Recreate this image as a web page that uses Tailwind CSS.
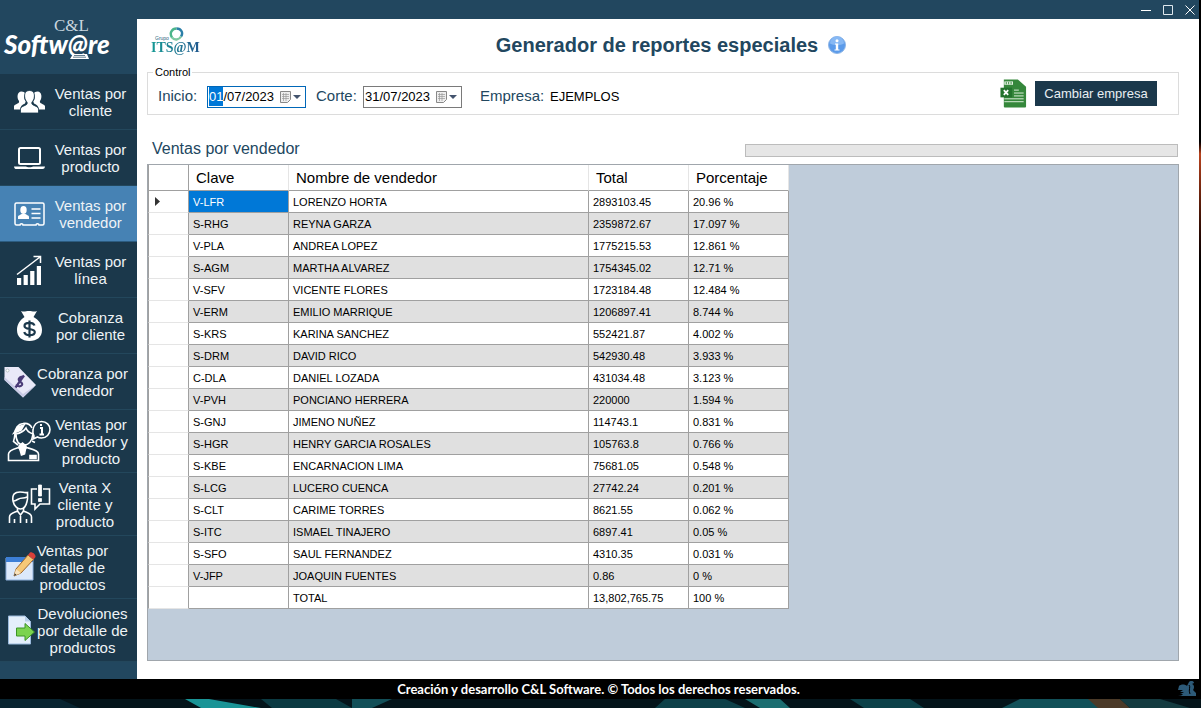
<!DOCTYPE html>
<html lang="es">
<head>
<meta charset="utf-8">
<meta name="viewport" content="width=device-width, initial-scale=1">
<title>Generador de reportes especiales</title>
<script src="https://cdn.jsdelivr.net/npm/@tailwindcss/browser@4"></script>
</head>
<body class="flex min-h-screen flex-col bg-[#03090d] font-['Liberation_Sans',Arial,sans-serif] text-black">
<div class="flex flex-1">
  <div class="flex flex-1 flex-col">
    <div class="flex flex-1">
      <!-- Sidebar -->
      <aside class="flex w-[137px] shrink-0 flex-col bg-[#22475f]">
        <div class="flex h-[74px] flex-col px-1 pt-[18px] text-white">
          <span class="pl-[50px] font-['Liberation_Serif',serif] text-[17px] leading-4 text-[#c9d6df]">C&amp;L</span>
          <span class="font-['Lato',sans-serif] text-[26px] leading-5 font-black italic">Softw@re</span>
          <svg class="ml-[66px] h-[5px] w-5" viewBox="0 0 20 5" fill="#fff"><path d="M3 0h14l2 5H0z"/><path d="M4 1.500h11M3 3.200h13" stroke="#22475f" stroke-width=".7"/></svg>
        </div>
        <nav class="flex flex-col text-center text-[15px] leading-[17px] whitespace-nowrap text-[#eef3f6]">
          <button type="button" class="flex h-14 items-center border-b border-[#23475c] bg-[#1b384b]">
            <svg class="mr-[7px] ml-[14px] h-6 w-[31px] shrink-0" viewBox="0 0 31 24" fill="#fff"><path d="M7.500 1.500c2 0 3 .8 3.500 1.700-1.500 3-1 6 .7 8.300l-.7 2c-3 1.200-4.600 2.800-5 6H0v-3.200c0-1.500 3.500-2.300 4.700-3.500.6-.6.500-1.500 0-2.200C3 8.500 2.700 1.500 7.500 1.500zM23.500 1.500c-2 0-3 .8-3.500 1.700 1.500 3 1 6-.7 8.300l.7 2c3 1.200 4.600 2.800 5 6h6v-3.200c0-1.500-3.500-2.300-4.700-3.500-.6-.6-.5-1.500 0-2.200 1.700-2.100 2-9.100-2.800-9.100z"/><path d="M15.500.5c4.300 0 5.200 3.500 4.800 6.500-.3 2.400-1.300 4-2.300 5-.4.800-.3 1.800.3 2.400 1.800 1.600 6.200 1.900 6.200 5V23h-18v-3.600c0-3.100 4.400-3.400 6.200-5 .6-.6.700-1.600.3-2.400-1-1-2-2.600-2.300-5-.4-3 .5-6.500 4.800-6.500z" stroke="#1b384b" stroke-width=".8"/></svg>
            <span class="w-[77px]">Ventas por<br>cliente</span>
          </button>
          <button type="button" class="flex h-14 items-center border-b border-[#23475c] bg-[#1b384b]">
            <svg class="mr-[7px] ml-[14px] h-6 w-[31px] shrink-0" viewBox="0 0 31 24" fill="none" stroke="#fff" stroke-width="2"><rect x="5" y="2" width="21" height="16" rx="1.500"/><path d="M0 20.500h12c.5 1 6.500 1 7 0h12c-.5 1.800-1 2.500-2.500 2.500h-26C1 23 .3 22.500 0 20.500z" fill="#fff" stroke="none"/></svg>
            <span class="w-[77px]">Ventas por<br>producto</span>
          </button>
          <button type="button" aria-current="page" class="flex h-14 items-center border-b border-[#2c5c80] bg-[#4682b4]">
            <svg class="mr-[7px] ml-[14px] h-6 w-[31px] shrink-0" viewBox="0 0 31 24" fill="none" stroke="#fff" stroke-width="1.500"><path d="M2.500 1h26a1.500 1.500 0 0 1 1.500 1.500v19a1.500 1.500 0 0 1-1.500 1.500H25c0-1.800-3-1.800-3 0H9c0-1.800-3-1.800-3 0H2.500A1.500 1.500 0 0 1 1 21.500v-19A1.500 1.500 0 0 1 2.500 1z"/><path d="M17.500 7h9M17.500 11.500h9M17.500 16h9"/><g fill="#fff" stroke="none"><ellipse cx="9.500" cy="8" rx="3.200" ry="4"/><path d="M4 17v-2c0-2 3-2 3.500-3h4c.5 1 3.500 1 3.500 3v2z"/></g></svg>
            <span class="w-[77px]">Ventas por<br>vendedor</span>
          </button>
          <button type="button" class="flex h-14 items-center border-b border-[#23475c] bg-[#1b384b]">
            <svg class="mr-[7px] ml-[14px] h-[30px] w-[31px] shrink-0" viewBox="0 0 31 30" fill="#fff"><path d="M3 23h4.200v7H3zM9.600 20h4.200v10H9.600zM16.200 16h4.200v14h-4.200zM22.800 11H27v19h-4.200z"/><path d="M3 19.500 26 2M19.500 1.500h7v6.500" fill="none" stroke="#fff" stroke-width="1.500"/></svg>
            <span class="w-[77px]">Ventas por<br>línea</span>
          </button>
          <button type="button" class="flex h-14 items-center border-b border-[#23475c] bg-[#1b384b]">
            <svg class="mr-[7px] ml-[14px] h-[30px] w-[31px] shrink-0" viewBox="0 0 31 30"><path d="M7 0c3 1.200 5 0 8 0s5 1.200 8 0l-3.500 6C25 9 28 13.500 28 19c0 7-5 11-12.500 11S3 26 3 19C3 13.500 6 9 10.500 6z" fill="#fff"/><path d="M20.500 14.500c-.7-2-2.500-2.700-5-2.700-2.900 0-5 1-5 3.100 0 4.400 10.300 1.800 10.300 6.200 0 2.200-2.300 3.100-5.200 3.100-2.700 0-4.800-1-5.300-3.200M15.500 9.500v17" fill="none" stroke="#1b384b" stroke-width="2.200"/></svg>
            <span class="w-[77px]">Cobranza<br>por cliente</span>
          </button>
          <button type="button" class="flex h-14 items-center border-b border-[#23475c] bg-[#1b384b]">
            <svg class="ml-[3px] h-8 w-[33px] shrink-0" viewBox="0 0 33 32"><path d="M1.500 1h14L33 19 20 31.500 1.500 14z" fill="#e9e9f8"/><path d="m33 19-13 12.500L1.500 14v-3L20 28z" fill="#c9cbe6"/><rect x="3" y="3" width="3" height="3" rx="1.500" fill="#fff" stroke="#9aa" stroke-width=".6"/><path d="M21 11.500c-1.500-1.500-4-.5-5 1-1.800 2.700 4.500 3.500 3 6.500-1.200 2-4.500 1.500-6-.5M21 9.500l-8.500 12" fill="none" stroke="#4b3c78" stroke-width="2.200"/></svg>
            <span class="w-[93px]">Cobranza por<br>vendedor</span>
          </button>
          <button type="button" class="flex h-[63px] items-center border-b border-[#23475c] bg-[#1b384b]">
            <svg class="ml-[7px] h-[42px] w-11 shrink-0" viewBox="0 0 44 42" fill="none" stroke="#fff" stroke-width="1.600"><path d="M1.500 40.500V34c0-4 7-5.500 10-6.500l4 5 4-5c3 1 12 2.500 12 6.500v6.500z"/><path d="M23 35.500h6v3h-6z" fill="#fff"/><path d="M25 8c-2-4-6-5-9-4.500-5 .5-8 5-8 10-.5 5-1.500 8-1.500 8l4.500 3.500M9 14c5-1 8-3 10-6 1 3 4 5 7 6-1 7-4 11-9 11s-8-4-8-11zM25 21l3 1.500"/><path d="M12 26l3.500-3 3.500 3-1.500 8-3 1zM7 13l4-6 6-2-3 5z" fill="#fff"/><path d="M27 16c-1-2-1.500-4-1-6 .7-5 4-8.500 8.500-8.500 5 0 8.500 3.500 8.500 8s-3.500 8.500-8.500 8.500c-1.500 0-3-.3-4-1L26 19z"/><path d="M33 8h2v6M32.500 14.500H37M34 4v2" stroke-width="2"/></svg>
            <span class="w-20">Ventas por<br>vendedor y<br>producto</span>
          </button>
          <button type="button" class="flex h-[63px] items-center border-b border-[#23475c] bg-[#1b384b]">
            <svg class="mr-px ml-2 h-10 w-[43px] shrink-0" viewBox="0 0 43 40" fill="none" stroke="#fff" stroke-width="1.600"><path d="M1.500 39v-6c0-4 5-4.500 8-6l3 4 3-4c3 1.500 8 2 8 6v6M6.500 39v-4M18.500 39v-4M12.500 32v7M9.500 27v-3M15.500 27v-3"/><path d="M5 17c-1-7 2-9 7-9 3 0 4 1 7.500.5 0 4 .5 6-.5 9-1 5-3.500 7.500-6.500 7.500S6 22 5 17zM6 17c4-1 4-3 9-3 2 0 3-.5 4-1"/><path d="M29 5h-5.500v15H27v5l5-5h9.500V5H35"/><path d="M30.500 1h3v11h-3zM30.500 14.500h3v3h-3z" fill="#fff" stroke-width=".8"/></svg>
            <span class="w-[66px]">Venta X<br>cliente y<br>producto</span>
          </button>
          <button type="button" class="flex h-[63px] items-center border-b border-[#23475c] bg-[#1b384b]">
            <svg class="ml-[5px] h-[30px] w-[31px] shrink-0" viewBox="0 0 31 30"><path d="M1 6h27v22H1z" fill="#dce9fb" stroke="#8fb0dc"/><path d="M1 5h27v5H1z" fill="#3d7fd6"/><path d="m9 24 2-7L23 3l5.500 4.500L16 21z" fill="#f6c878" stroke="#a0682c"/><path d="m9 24 2-7 5 4z" fill="#f9e3bd"/><path d="m9 24 .8-2.600 1.800 1.400z" fill="#333"/><path d="m23 3 2-2.500c2-1 6 2 5.500 4.500l-2 2.500z" fill="#d9403a"/></svg>
            <span class="w-[73px]">Ventas por<br>detalle de<br>productos</span>
          </button>
          <button type="button" class="flex h-[63px] items-center border-b border-[#23475c] bg-[#1b384b]">
            <svg class="ml-[7px] h-[30px] w-[29px] shrink-0" viewBox="0 0 29 30"><path d="M1.500 1H18l5.500 5.500V29h-22z" fill="#e4effb" stroke="#9ab9dc"/><path d="M18 1v5.500h5.500z" fill="#b7cfe9"/><path d="M9.500 13H18V8.500l9.500 8.500-9.500 8.500V21H9.500z" fill="#7bd34f" stroke="#3d9426"/></svg>
            <span class="w-[93px]">Devoluciones<br>por detalle de<br>productos</span>
          </button>
        </nav>
      </aside>

      <div class="flex flex-1 flex-col bg-white">
        <!-- Window controls -->
        <div class="flex h-[19px] items-center justify-end gap-3 bg-[#22475f] pr-1">
          <button type="button" aria-label="Minimizar" class="h-[10px] w-[10px]"><svg class="size-[10px]" viewBox="0 0 10 10"><path d="M0 5.500h10" stroke="#fff"/></svg></button>
          <button type="button" aria-label="Maximizar" class="h-[10px] w-[10px]"><svg class="size-[10px]" viewBox="0 0 10 10"><path d="M.5.500h9v9h-9z" fill="none" stroke="#dfe8ee"/></svg></button>
          <button type="button" aria-label="Cerrar" class="h-[10px] w-[10px]"><svg class="size-[10px]" viewBox="0 0 10 10"><path d="m.5.500 9 9M9.500.500l-9 9" stroke="#fff"/></svg></button>
        </div>

        <main class="flex flex-1 flex-col pr-5 pb-[18px] pl-[10px]">
          <header class="flex h-[46px] items-center pt-1.5">
            <div class="flex h-9 w-[60px] shrink-0 flex-col pl-1">
              <div class="flex h-[14px] items-end">
                <span class="w-[18px] pl-1 text-[5px] leading-[5px] text-[#2b5f80]">Grupo</span>
                <svg class="h-[14px] w-[15px]" viewBox="0 0 15 14" fill="none" stroke-width="2.400"><path d="M3 10.500C0 6 3 1.500 7.500 1.500" stroke="#4bb58a"/><path d="M7.500 1.500c5 0 7 4.500 4.500 8" stroke="#2b7fa8"/><path d="M12 9.500c-2 3.500-6.500 4-9 1" stroke="#7cc8a0"/></svg>
              </div>
              <span class="self-start bg-gradient-to-r from-[#159a94] to-[#23598f] bg-clip-text font-['Liberation_Serif',serif] text-sm leading-[14px] font-bold text-transparent">ITS@M</span>
            </div>
            <div class="flex flex-1 items-center justify-center gap-[10px]">
              <h1 class="text-xl leading-6 font-bold text-[#22475f]">Generador de reportes especiales</h1>
              <button type="button" aria-label="Información" class="size-[18px]"><svg class="size-[18px]" viewBox="0 0 18 18"><circle cx="9" cy="9" r="8.500" fill="#5b9bea" stroke="#8fb6e6"/><path d="M2 7.500a7 7 0 0 1 14 0c-4 2-10 2-14 0z" fill="#86b8f4"/><circle cx="9" cy="4.700" r="1.500" fill="#fff"/><path d="M7 7.500h3.200v6H11.500v1H6.500v-1h1.300V8.500H7z" fill="#fff"/></svg></button>
            </div>
            <div class="w-11 shrink-0"></div>
          </header>

          <fieldset class="border border-[#dcdcdc] px-[10px]">
            <legend class="-ml-[5px] px-[2px] text-[11px] leading-[14px]">Control</legend>
            <div class="flex h-[35px] items-center text-[15px] text-[#22475f]">
              <label for="inicio" class="w-[49px]">Inicio:</label>
              <div class="flex h-[22px] w-[99px] items-center border border-[#0067b8] bg-white pr-1">
                <input id="inicio" type="text" value="01/07/2023" class="w-[72px] px-px text-[13px] text-black outline-none selection:bg-[#0078d7] selection:text-white">
                <button type="button" aria-label="Abrir calendario de inicio"><svg class="h-3 w-[21px]" viewBox="0 0 21 12"><path d="M.5.500h10v8l-3 3h-7z" fill="#eee" stroke="#888"/><path d="M2 3.500h7M2 5.500h7M2 7.500h7M3.500 2v8M6 2v8" stroke="#999" stroke-width=".7"/><path d="M13 4h8l-4 4z" fill="#44546e"/></svg></button>
              </div>
              <label for="corte" class="ml-[10px] w-[47px]">Corte:</label>
              <div class="flex h-[22px] w-[99px] items-center border border-[#7a7a7a] bg-white pr-1">
                <input id="corte" type="text" value="31/07/2023" class="w-[72px] px-px text-[13px] text-black outline-none">
                <button type="button" aria-label="Abrir calendario de corte"><svg class="h-3 w-[21px]" viewBox="0 0 21 12"><path d="M.5.500h10v8l-3 3h-7z" fill="#eee" stroke="#888"/><path d="M2 3.500h7M2 5.500h7M2 7.500h7M3.500 2v8M6 2v8" stroke="#999" stroke-width=".7"/><path d="M13 4h8l-4 4z" fill="#44546e"/></svg></button>
              </div>
              <span class="ml-[18px] w-[70px]">Empresa:</span>
              <span class="text-[13px] text-black">EJEMPLOS</span>
              <div class="mr-[11px] ml-auto flex items-center gap-2 self-start">
                <button type="button" aria-label="Exportar a Excel"><svg class="h-[29px] w-[27px]" viewBox="0 0 27 30"><path d="M3.500.500H18L26.500 8v20.500a1 1 0 0 1-1 1h-21a1 1 0 0 1-1-1z" fill="#35873b"/><path d="M0 9h12v10H0z" fill="#23732d"/><path d="M4 2.500h9V6H4z" fill="#e4f2e3"/><path d="M6 3v2.500M8.500 3v2.500M11 3v2.500" stroke="#35873b"/><path d="m3.500 11.500 4.500 5M8 11.500l-4.500 5" stroke="#fff" stroke-width="1.800"/><path d="M14 11.500h5M14 14.500h10M14 17.500h10M4 20.500h20M4 23.500h20" stroke="#dff0de"/></svg></button>
                <button type="button" class="h-[25px] w-[122px] bg-[#1b384b] text-[13px] text-[#e9eff3]">Cambiar empresa</button>
              </div>
            </div>
          </fieldset>

          <div class="flex h-[49px] items-center justify-between pt-[18px] pl-[5px]">
            <h2 class="text-base text-[#22475f]">Ventas por vendedor</h2>
            <div role="progressbar" aria-label="Progreso" aria-valuenow="0" class="mt-1 mr-px h-[13px] w-[433px] border border-[#bcbcbc] bg-[#e6e6e6]"></div>
          </div>

          <div class="flex-1 border border-[#a0a6ac] bg-[#bfccda]">
            <table class="w-[641px] table-fixed border-separate border-spacing-0 text-left text-[11px]">
              <colgroup><col class="w-[41px]"><col class="w-[100px]"><col class="w-[300px]"><col class="w-[100px]"><col class="w-[100px]"></colgroup>
              <thead>
                <tr class="h-[26px] bg-white text-[15px] leading-5 *:border-b *:border-b-[#a0a0a0] *:p-0 *:font-normal">
                  <td class="border-r border-l border-[#a0a0a0]"></td>
                  <th scope="col" class="border-r border-r-[#e5e5e5]"><span class="pl-[7px]">Clave</span></th>
                  <th scope="col" class="border-r border-r-[#e5e5e5]"><span class="pl-[7px]">Nombre de vendedor</span></th>
                  <th scope="col" class="border-r border-r-[#e5e5e5]"><span class="pl-[7px]">Total</span></th>
                  <th scope="col" class="border-r border-r-[#e5e5e5]"><span class="pl-[7px]">Porcentaje</span></th>
                </tr>
              </thead>
              <tbody id="filas"></tbody>
            </table>
          </div>
        </main>
      </div>
    </div>
    <footer class="flex h-5 items-center bg-black pr-[2px] text-white">
      <p class="flex-1 pl-5 text-center font-['Lato',sans-serif] text-[13px] leading-5 font-bold">Creación y desarrollo C&amp;L Software. © Todos los derechos reservados.</p>
      <svg class="h-4 w-5 shrink-0" viewBox="0 0 20 16" fill="#2d5a78"><path d="M2 5c2-2 6-2 8 0l2-4c2-2 5-1 5 1l-2 1c3 1 2 5 1 6l3 3v3H1c3 0 4-1 5-2H3c2-1 3-1 4-2H3l3-2H1z"/><path d="M12 4c2 2-1 5 1 9" stroke="#000" fill="none"/></svg>
    </footer>
  </div>
  <div class="w-[2px] bg-gradient-to-b from-black from-20% via-[#b8431f] via-22% to-black to-40%"></div>
</div>
<!-- Desktop strip under the window -->
<svg class="h-[9px] w-full shrink-0" viewBox="0 0 1201 9" preserveAspectRatio="none">
  <path d="M0 0h1201v9H0z" fill="#04141a"/>
  <path d="M0 0h60l20 9H0z" fill="#082430"/><path d="M185 0h24l52 9h-60z" fill="#1a9496"/><path d="M261 0h75l16 9h-80z" fill="#0b3a42"/><path d="M352 0h40l-20 9h-20z" fill="#124f58"/>
  <path d="M665 0h60l20 9h-90z" fill="#0d4048"/><path d="M745 0h35l10 9h-30z" fill="#1b6d70"/><path d="M850 0h60l14 9h-60z" fill="#0c4148"/>
  <path d="M1020 0h70l12 9h-100z" fill="#115058"/><path d="M1088 0h32l10 9h-32z" fill="#4b3a28"/><path d="M1120 0h40l30 9h-60z" fill="#143b40"/>
</svg>
<script>
  const filas = [
    ["V-LFR", "LORENZO HORTA", "2893103.45", "20.96 %"],
    ["S-RHG", "REYNA GARZA", "2359872.67", "17.097 %"],
    ["V-PLA", "ANDREA LOPEZ", "1775215.53", "12.861 %"],
    ["S-AGM", "MARTHA ALVAREZ", "1754345.02", "12.71 %"],
    ["V-SFV", "VICENTE FLORES", "1723184.48", "12.484 %"],
    ["V-ERM", "EMILIO MARRIQUE", "1206897.41", "8.744 %"],
    ["S-KRS", "KARINA SANCHEZ", "552421.87", "4.002 %"],
    ["S-DRM", "DAVID RICO", "542930.48", "3.933 %"],
    ["C-DLA", "DANIEL LOZADA", "431034.48", "3.123 %"],
    ["V-PVH", "PONCIANO HERRERA", "220000", "1.594 %"],
    ["S-GNJ", "JIMENO NUÑEZ", "114743.1", "0.831 %"],
    ["S-HGR", "HENRY GARCIA ROSALES", "105763.8", "0.766 %"],
    ["S-KBE", "ENCARNACION LIMA", "75681.05", "0.548 %"],
    ["S-LCG", "LUCERO CUENCA", "27742.24", "0.201 %"],
    ["S-CLT", "CARIME TORRES", "8621.55", "0.062 %"],
    ["S-ITC", "ISMAEL TINAJERO", "6897.41", "0.05 %"],
    ["S-SFO", "SAUL FERNANDEZ", "4310.35", "0.031 %"],
    ["V-JFP", "JOAQUIN FUENTES", "0.86", "0 %"],
    ["", "TOTAL", "13,802,765.75", "100 %"]
  ];
  const flecha = '<svg class="ml-1.5 h-[9px] w-[5px]" viewBox="0 0 5 9"><path d="M0 0l5 4.500L0 9z" fill="#333"/></svg>';
  document.getElementById("filas").innerHTML = filas.map((fila, i) =>
    `<tr class="h-[22px]"><td class="border-r border-b border-l border-r-[#a0a0a0] border-b-[#e5e5e5] border-l-[#a0a0a0] bg-white p-0">${i === 0 ? flecha : ""}</td>` +
    fila.map((texto, j) => {
      const tono = i === 0 && j === 0 ? "bg-[#0078d7] text-white" : i % 2 ? "bg-[#e0e0e0]" : "bg-white";
      return `<td class="border-r border-b border-[#a0a0a0] p-0 pt-px pl-1 leading-4 ${tono}">${texto}</td>`;
    }).join("") + "</tr>").join("");

  // The day segment of the start date is selected when the window opens.
  const inicio = document.getElementById("inicio");
  inicio.focus();
  inicio.setSelectionRange(0, 2);
</script>
</body>
</html>
